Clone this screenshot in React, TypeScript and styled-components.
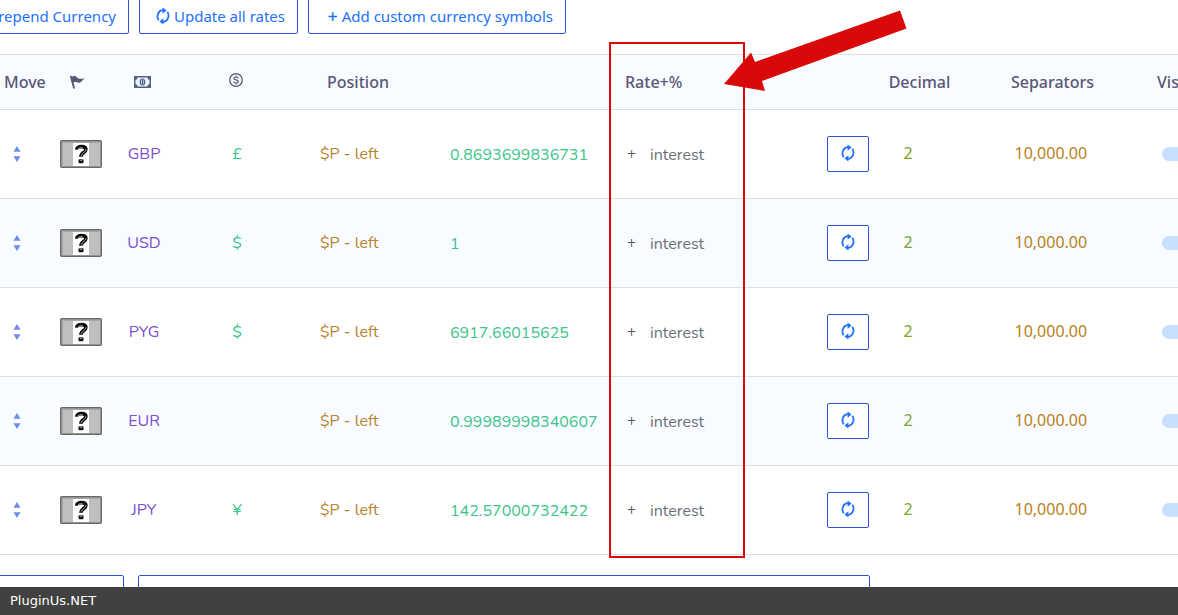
import React from "react";
import styled, { createGlobalStyle } from "styled-components";

const GlobalStyle = createGlobalStyle`
  *, *::before, *::after { box-sizing: border-box; }
  body {
    margin: 0;
    background: #fff;
    color: #5a5777;
    font-family: "Noto Sans", sans-serif;
    font-size: 16px;
    line-height: 24px;
  }
`;

const bodyFont = `Nunito, "Noto Sans", sans-serif`;

const Page = styled.div`
  position: relative;
  height: 100vh;
  overflow: hidden;
`;

const Toolbar = styled.div<{ $place: "top" | "bottom" }>`
  display: flex;
  gap: ${(p) => (p.$place === "top" ? 10 : 14)}px;
  margin-top: ${(p) => (p.$place === "top" ? -2 : 20)}px;
  margin-left: -40px;
`;

const ToolButton = styled.button<{ $width: number; $link?: boolean }>`
  display: inline-flex;
  flex: none;
  align-items: center;
  justify-content: flex-end;
  gap: 4px;
  height: 36px;
  padding: 0 12px ${(p) => (p.$link ? 2 : 0)}px;
  width: ${(p) => p.$width}px;
  border: 1px solid #2f55d4;
  border-radius: 2px;
  background: #fff;
  color: #2271ff;
  font: 400 15px/20px "Noto Sans", sans-serif;
  white-space: nowrap;
  cursor: pointer;
`;

const Plus = styled.span`
  font-weight: 500;
  font-size: 18px;
`;

const Table = styled.table`
  width: 100%;
  min-width: 1240px;
  margin-top: 20px;
  border-collapse: separate;
  border-spacing: 0;
  table-layout: fixed;
  border-top: 1px solid #dadfe6;
`;

const HeadCell = styled.th<{ $left?: number }>`
  height: 55px;
  padding: 0 0 0 ${(p) => p.$left ?? 0}px;
  border-bottom: 1px solid #dadfe6;
  background: #f8fbff;
  font-weight: 500;
  text-align: ${(p) => (p.$left === undefined ? "center" : "left")};
  white-space: nowrap;
  svg { display: block; margin: 0 auto; }
`;

const Row = styled.tr`
  &:nth-child(even) { background: #f8fbff; }
`;

const Cell = styled.td<{ $left?: number; $color?: string }>`
  height: 89px;
  padding: 0 0 0 ${(p) => p.$left ?? 0}px;
  border-bottom: 1px solid #dadfe6;
  color: ${(p) => p.$color ?? "inherit"};
  font-family: ${bodyFont};
  text-align: ${(p) => (p.$left === undefined ? "center" : "left")};
  svg { display: block; margin: 0 ${(p) => (p.$left === undefined ? "auto" : "0")}; }
`;

const Choice = styled.select<{ $width: number; $plain?: boolean }>`
  appearance: none;
  width: ${(p) => p.$width}px;
  height: ${(p) => (p.$plain ? 26 : 24)}px;
  margin: 0;
  padding: 0 0 ${(p) => (p.$plain ? 2 : 0)}px;
  border: 0;
  background: transparent;
  color: inherit;
  font: 400 16px/24px ${(p) => (p.$plain ? `"Noto Sans", sans-serif` : bodyFont)};
  vertical-align: ${(p) => (p.$plain ? "middle" : "baseline")};
`;

const Field = styled.input<{ $width: number; $color?: string }>`
  width: ${(p) => p.$width}px;
  height: 26px;
  padding: 2px 0 0;
  border: 0;
  outline: 0;
  background: transparent;
  color: ${(p) => p.$color ?? "#6b6f78"};
  font: 400 16px/24px ${bodyFont};
  vertical-align: middle;
  &::placeholder { color: #6b6f78; opacity: 1; }
`;

const Interest = styled.label`
  display: flex;
  align-items: center;
  gap: 14px;
  font-size: 15px;
  color: #50575e;
`;

const RefreshButton = styled.button`
  display: inline-flex;
  align-items: center;
  justify-content: center;
  width: 42px;
  height: 36px;
  padding: 0 0 2px;
  border: 1px solid #2f55d4;
  border-radius: 2px;
  background: #fff;
  color: #2271ff;
  vertical-align: middle;
  cursor: pointer;
`;

const Switch = styled.input`
  appearance: none;
  display: block;
  width: 38px;
  height: 14px;
  margin: 0;
  border-radius: 7px;
  background: #c8dfff;
`;

const Highlight = styled.div`
  position: absolute;
  top: 42px;
  left: 609px;
  width: 136px;
  height: 516px;
  border: 2px solid #d90909;
  pointer-events: none;
`;

const Pointer = styled.svg`
  position: absolute;
  top: 0;
  left: 720px;
  pointer-events: none;
`;

const Footer = styled.footer`
  position: absolute;
  right: 0;
  bottom: 0;
  left: 0;
  height: 28px;
  padding: 0 10px;
  background: #414141;
  color: #fff;
  font: 400 13px/28px "DejaVu Sans", sans-serif;
`;

const RefreshIcon = () => (
  <svg width="14" height="18" viewBox="0 0 14 18" fill="none" stroke="currentColor" strokeWidth="1.8">
    <path d="M2.700 13.200A5.600 6.200 0 0 1 6.500 3.200H8" />
    <path d="M11.300 4.800A5.600 6.200 0 0 1 7.500 14.800H6" />
    <path d="M6.600.4 10.600 3.400 6.600 6.800zM7.400 17.600 3.400 14.600 7.400 11.200z" fill="currentColor" stroke="none" />
  </svg>
);

const SortIcon = () => (
  <svg width="8" height="16" viewBox="0 0 8 16" fill="#6b8ce8">
    <path d="M4 0 7.500 5.700H.5zM.5 10.200h7L4 15.900z" />
  </svg>
);

const FlagIcon = () => (
  <svg width="24" height="16" viewBox="0 0 24 16" fill="#5a5777">
    <path d="M.8 2.200 2.400 1.600 3 3C5 .8 6.600 2 8 3.500 10 5.300 12 4.600 15.800 4.400 13 6 12.500 8.700 10 8.700 7.500 8.600 6.500 7.400 4.600 8.600L6 14.500H4.200z" />
  </svg>
);

const MoneyIcon = () => (
  <svg width="21" height="12" viewBox="0 0 21 12">
    <rect width="17" height="12" fill="#55607e" />
    <path d="M3.500 1.500h10a2 2 0 0 0 2 2.200v4.600a2 2 0 0 0-2 2.200h-10a2 2 0 0 0-2-2.200V3.700a2 2 0 0 0 2-2.200z" fill="#e6f5ff" />
    <ellipse cx="8.500" cy="6" rx="2.800" ry="3.500" fill="#55607e" />
    <ellipse cx="8.500" cy="6" rx="1.500" ry="2.400" fill="#d6e6f5" />
    <path d="M8.600 4v4" stroke="#55607e" strokeWidth="1.200" />
  </svg>
);

const CoinIcon = () => (
  <svg width="16" height="20" viewBox="0 0 16 20" fill="none" stroke="#5a5777">
    <circle cx="7" cy="8" r="6.300" strokeWidth="1.300" />
    <path d="M9.300 6.200C9 5.300 8.100 5 7 5c-1.300 0-2.200.6-2.200 1.500C4.800 8.600 9.300 7.300 9.300 9.500 9.300 10.500 8.300 11 7 11c-1.200 0-2.200-.5-2.500-1.400M7 3.600V5M7 11v1.400" strokeWidth="1.200" />
  </svg>
);

const UnknownFlag = () => (
  <svg width="42" height="28" viewBox="0 0 42 28">
    <rect x=".75" y=".75" width="40.500" height="26.500" rx="1" fill="#bfbfbf" stroke="#686868" strokeWidth="1.500" />
    <path d="M13 2h16v24H13z" fill="#fff" />
    <path d="M2.500 25.500v-23h37" fill="none" stroke="#a5a5a5" />
    <path d="M16.800 9.600C16.600 7.400 19 6.600 21.500 6.600c3 0 4.400 1.200 4.400 3 0 3.100-5 3-5 7.200" fill="none" stroke="#080808" strokeWidth="3.600" />
    <path d="M18 8.700c2-1.300 3.700-1.200 4.900-.6M26 9.200c.3 2.600-4 3.400-4.800 6.600" fill="none" stroke="#aaa" strokeWidth="1" />
    <rect x="18.500" y="19.200" width="5" height="4" rx="1" fill="#111" />
    <path d="M19.800 20.300h2.500" stroke="#aaa" />
  </svg>
);

const currencies = [
  { code: "GBP", symbol: "£", rate: "0.8693699836731" },
  { code: "USD", symbol: "$", rate: "1" },
  { code: "PYG", symbol: "$", rate: "6917.66015625" },
  { code: "EUR", symbol: "", rate: "0.99989998340607" },
  { code: "JPY", symbol: "¥", rate: "142.57000732422" },
];

const columns = [50, 62, 64, 122, 120, 192, 200, 76, 67, 199];

export default function App() {
  return (
    <Page>
      <GlobalStyle />
      <Toolbar $place="top">
        <ToolButton $width={169}>Prepend Currency</ToolButton>
        <ToolButton $width={159}>
          <RefreshIcon />
          Update all rates
        </ToolButton>
        <ToolButton $width={258}>
          <Plus>+</Plus>
          Add custom currency symbols
        </ToolButton>
      </Toolbar>

      <Table>
        <colgroup>
          {columns.map((width, i) => (
            <col key={i} width={width} />
          ))}
          <col />
        </colgroup>
        <thead>
          <tr>
            <HeadCell $left={4}>Move</HeadCell>
            <HeadCell aria-label="Flag"><FlagIcon /></HeadCell>
            <HeadCell aria-label="Currency"><MoneyIcon /></HeadCell>
            <HeadCell aria-label="Symbol"><CoinIcon /></HeadCell>
            <HeadCell>Position</HeadCell>
            <HeadCell />
            <HeadCell $left={15}>Rate+%</HeadCell>
            <HeadCell />
            <HeadCell>Decimal</HeadCell>
            <HeadCell>Separators</HeadCell>
            <HeadCell $left={5}>Visible</HeadCell>
          </tr>
        </thead>
        <tbody>
          {currencies.map(({ code, symbol, rate }) => (
            <Row key={code}>
              <Cell $left={13}><SortIcon /></Cell>
              <Cell><UnknownFlag /></Cell>
              <Cell $color="#7b4fcf">{code}</Cell>
              <Cell $color="#30c48d">{symbol}</Cell>
              <Cell $color="#b8832c">
                <Choice $width={76} aria-label={`${code} position`}>
                  <option>$P - left</option>
                </Choice>
              </Cell>
              <Cell $left={32}>
                <Field $width={156} $color="#3cc48a" defaultValue={rate} aria-label={`${code} rate`} />
              </Cell>
              <Cell $left={17}>
                <Interest>
                  +
                  <Field $width={90} placeholder="interest" />
                </Interest>
              </Cell>
              <Cell>
                <RefreshButton aria-label={`Update ${code} rate`}>
                  <RefreshIcon />
                </RefreshButton>
              </Cell>
              <Cell $color="#7ba428">
                <Choice $width={32} $plain aria-label={`${code} decimals`}>
                  <option>2</option>
                </Choice>
              </Cell>
              <Cell $color="#b98116">
                <Choice $width={76} $plain aria-label={`${code} separators`}>
                  <option>10,000.00</option>
                </Choice>
              </Cell>
              <Cell $left={10}>
                <Switch type="checkbox" role="switch" aria-label={`${code} visible`} />
              </Cell>
            </Row>
          ))}
        </tbody>
      </Table>

      <Toolbar $place="bottom">
        <ToolButton $width={164} $link>Add Currency</ToolButton>
        <ToolButton $width={732} $link>
          Read wiki about Currency Active codes &lt;- Get right currencies codes here if you are not sure about it!
        </ToolButton>
      </Toolbar>

      <Highlight />
      <Pointer width="200" height="100" viewBox="0 0 200 100" fill="#d90909">
        <path d="M4 84 31 52.500 35 62 180 10.500 186.500 28.500 42 81 45 91z" />
      </Pointer>
      <Footer>PluginUs.NET</Footer>
    </Page>
  );
}
